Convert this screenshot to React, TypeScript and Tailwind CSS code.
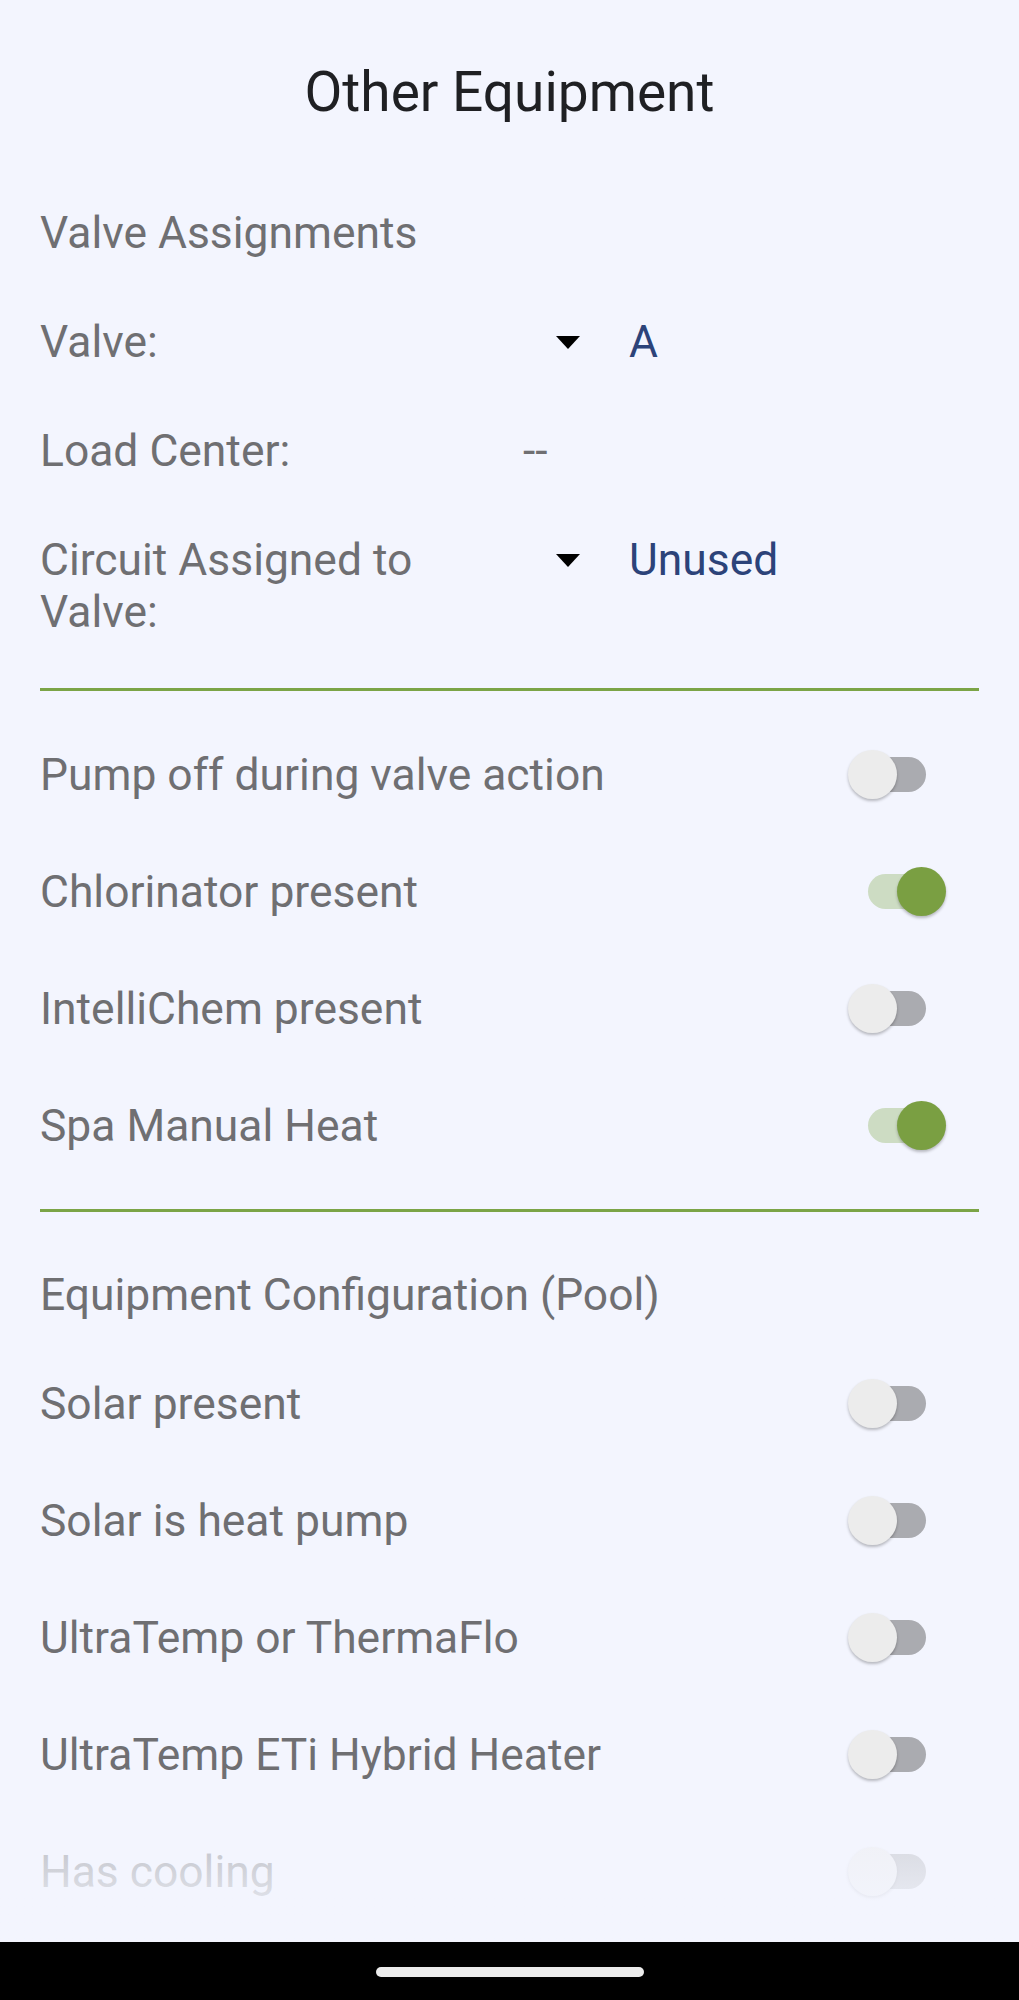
import React from "react";

const valveRows = [
  { label: "Valve:", value: "A", dropdown: true },
  { label: "Load Center:", value: "--", dropdown: false },
  { label: "Circuit Assigned to Valve:", value: "Unused", dropdown: true },
];

const optionRows = [
  { label: "Pump off during valve action", on: false },
  { label: "Chlorinator present", on: true },
  { label: "IntelliChem present", on: false },
  { label: "Spa Manual Heat", on: true },
];

const poolRows = [
  { label: "Solar present", on: false },
  { label: "Solar is heat pump", on: false },
  { label: "UltraTemp or ThermaFlo", on: false },
  { label: "UltraTemp ETi Hybrid Heater", on: false },
  { label: "Has cooling", on: false, disabled: true },
];

function Toggle({ on }: { on: boolean }) {
  return (
    <div className="relative h-[49px] w-[98px] shrink-0">
      <div
        className={`absolute left-[20px] top-[7px] h-[35px] w-[58px] rounded-full ${
          on ? "bg-[#cddcc3]" : "bg-[#aaabb0]"
        }`}
      />
      <div
        className={`absolute top-0 h-[49px] w-[49px] rounded-full shadow-[0_2px_3px_rgba(0,0,0,0.25)] ${
          on ? "left-[49px] bg-[#7a9f42]" : "left-0 bg-[#ececec]"
        }`}
      />
    </div>
  );
}

function Caret() {
  return (
    <svg width="24" height="13" viewBox="0 0 24 13" className="shrink-0">
      <polygon points="0,0 24,0 12,13" fill="#000" />
    </svg>
  );
}

function SwitchRow({ label, on, disabled }: { label: string; on: boolean; disabled?: boolean }) {
  return (
    <div className={`flex h-[117px] items-center justify-between pl-[40px] pr-[73px] ${disabled ? "opacity-40" : ""}`}>
      <span className="text-[44.4px] leading-[52px] text-[#6f6f72]">{label}</span>
      <Toggle on={on} />
    </div>
  );
}

export default function App() {
  return (
    <div className="flex h-[2000px] w-[1019px] flex-col bg-[#f3f5fe] font-[Roboto,sans-serif]">
      <div className="relative h-[1942px] overflow-hidden">
        <h1 className="pt-[60px] text-center text-[55px] font-normal leading-[64px] text-[#1f2023]">
          Other Equipment
        </h1>

        <div className="mt-[83px] px-[40px] text-[44.4px] leading-[52px] text-[#6f6f72]">Valve Assignments</div>

        {valveRows.map((row) => (
          <div key={row.label} className="mt-[57px] flex items-start px-[40px]">
            <div className="w-[483px] shrink-0 text-[44.4px] leading-[52px] text-[#6f6f72]">{row.label}</div>
            {row.dropdown ? (
              <div className="flex h-[52px] items-center pl-[33px]">
                <Caret />
                <span className="ml-[49px] text-[44.4px] leading-[52px] text-[#2c4379]">{row.value}</span>
              </div>
            ) : (
              <span className="text-[44.4px] leading-[52px] text-[#6f6f72]">{row.value}</span>
            )}
          </div>
        ))}

        <div className="mx-[40px] mt-[50px] h-[3px] bg-[#7ba446]" />

        <div className="mt-[25px]">
          {optionRows.map((row) => (
            <SwitchRow key={row.label} label={row.label} on={row.on} />
          ))}
        </div>

        <div className="mx-[40px] mt-[25px] h-[3px] bg-[#7ba446]" />

        <div className="mt-[57px] px-[40px] text-[44.4px] leading-[52px] text-[#6f6f72]">
          Equipment Configuration (Pool)
        </div>

        <div className="mt-[24px]">
          {poolRows.map((row) => (
            <SwitchRow key={row.label} label={row.label} on={row.on} disabled={row.disabled} />
          ))}
        </div>

        {/* scroll view fading edge */}
        <div className="pointer-events-none absolute bottom-0 left-0 h-[112px] w-full bg-gradient-to-b from-[#f3f5fe00] to-[#f3f5fe]" />
      </div>

      <div className="flex h-[58px] items-start justify-center bg-black pt-[25px]">
        <div className="h-[10px] w-[268px] rounded-full bg-[#ececec]" />
      </div>
    </div>
  );
}
